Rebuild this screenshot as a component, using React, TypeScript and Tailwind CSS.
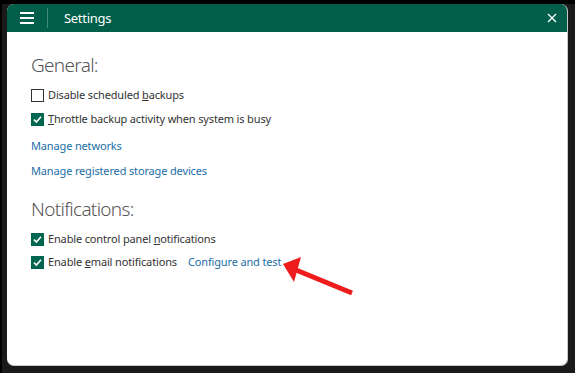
import React from "react";

const font = { fontFamily: '"Noto Sans", "Open Sans", sans-serif' };

function Box({ checked }: { checked?: boolean }) {
  return checked ? (
    <div className="w-[13px] h-[13px] bg-[#00664f] flex items-center justify-center shrink-0">
      <svg width="11" height="11" viewBox="0 0 11 11">
        <path d="M2 5.6 L4.4 8 L9 2.8" fill="none" stroke="white" strokeWidth="1.6" />
      </svg>
    </div>
  ) : (
    <div className="w-[13px] h-[13px] border border-[#333] bg-white shrink-0" />
  );
}

export default function App() {
  return (
    <div className="relative w-[575px] h-[373px] bg-[#1a1a1a] border-l-2 border-t-4 border-black pl-[5px] overflow-hidden" style={font}>
      <div className="w-[561px] h-[362px] bg-white rounded-[7px] overflow-hidden flex flex-col border-r border-b border-[#c8c8c8]">
        <div className="h-[28px] bg-[#005e4a] flex items-center shrink-0 text-white">
          <div className="ml-[13px] w-[14px] flex flex-col gap-[3px]">
            <div className="h-[2px] bg-white" />
            <div className="h-[2px] bg-white" />
            <div className="h-[2px] bg-white" />
          </div>
          <div className="ml-[13px] w-px h-[20px] bg-[#3f8a78]" />
          <div className="ml-[16px] text-[13px] tracking-[-0.3px] leading-none">Settings</div>
          <div className="ml-auto mr-[10px]">
            <svg width="10" height="10" viewBox="0 0 10 10">
              <path d="M1 1 L9 9 M9 1 L1 9" stroke="white" strokeWidth="1.3" />
            </svg>
          </div>
        </div>
        <div className="flex flex-col pl-[24px] text-[11px] tracking-[-0.15px] text-[#333]">
          <div className="mt-[20px] h-[26px] text-[19px] tracking-[-0.7px] font-light text-[#555] leading-[26px]">General:</div>
          <div className="mt-[8px] h-[18px] flex items-center gap-[4px]">
            <Box />
            <span>Disable scheduled <span className="underline">b</span>ackups</span>
          </div>
          <div className="mt-[6px] h-[18px] flex items-center gap-[4px]">
            <Box checked />
            <span><span className="underline">T</span>hrottle backup activity when system is busy</span>
          </div>
          <div className="mt-[9px] h-[18px] flex items-center text-[#1b6ea7]">Manage networks</div>
          <div className="mt-[7px] h-[18px] flex items-center text-[#1b6ea7]">Manage registered storage devices</div>
          <div className="mt-[16px] h-[26px] text-[19px] tracking-[-0.7px] font-light text-[#555] leading-[26px]">Notifications:</div>
          <div className="mt-[8px] h-[18px] flex items-center gap-[4px]">
            <Box checked />
            <span>Enable control panel <span className="underline">n</span>otifications</span>
          </div>
          <div className="mt-[5px] h-[18px] flex items-center gap-[4px]">
            <Box checked />
            <span>Enable <span className="underline">e</span>mail notifications</span>
            <span className="ml-[7px] text-[#1b6ea7]">Configure and test</span>
          </div>
        </div>
      </div>
      <svg className="absolute -left-[2px] -top-[4px] pointer-events-none" width="575" height="373">
        <line x1="352" y1="293" x2="296" y2="270" stroke="#ee1c1c" strokeWidth="5" />
        <polygon points="283,264 301,257 294,282" fill="#ee1c1c" />
      </svg>
    </div>
  );
}
